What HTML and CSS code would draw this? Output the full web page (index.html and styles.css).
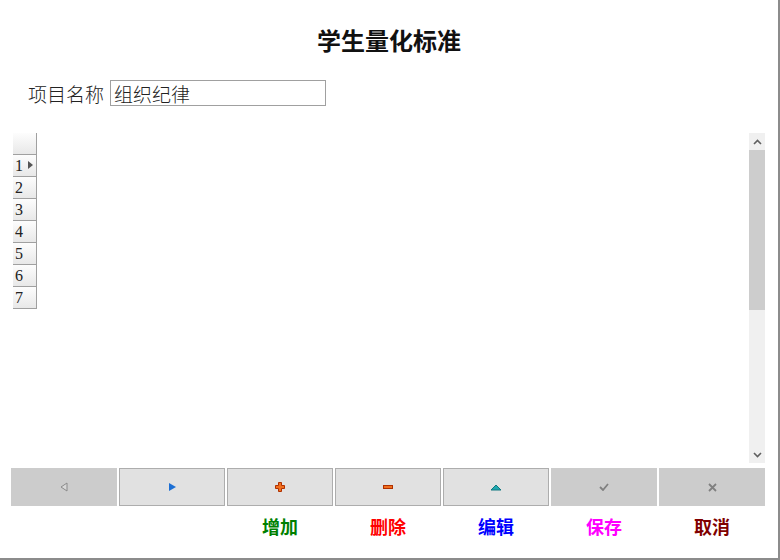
FILE: index.html
```html
<!DOCTYPE html>
<html lang="zh">
<head>
<meta charset="UTF-8">
<title>学生量化标准</title>
<link rel="stylesheet" href="styles.css">
</head>
<body>
<div class="frame">
    <h2 class="title">学生量化标准</h2>

    <div class="field">
        <label for="itemName">项目名称</label>
        <input type="text" id="itemName" value="组织纪律">
    </div>

    <div class="grid">
        <div class="rowheads">
            <div class="rh corner"></div>
            <div class="rh">1<span class="cur"></span></div>
            <div class="rh">2</div>
            <div class="rh">3</div>
            <div class="rh">4</div>
            <div class="rh">5</div>
            <div class="rh">6</div>
            <div class="rh">7</div>
        </div>
        <div class="cells"></div>
        <div class="vscroll">
            <div class="arrow">
                <svg width="9" height="6" viewBox="0 0 9 6"><path d="M1 5 L4.5 1.5 L8 5" fill="none" stroke="#606060" stroke-width="1.6"/></svg>
            </div>
            <div class="thumb"></div>
            <div class="track"></div>
            <div class="arrow">
                <svg width="9" height="6" viewBox="0 0 9 6"><path d="M1 1 L4.5 4.5 L8 1" fill="none" stroke="#606060" stroke-width="1.6"/></svg>
            </div>
        </div>
    </div>

    <div class="navbar">
        <div class="nbtn off">
            <svg width="10" height="10" viewBox="0 0 10 10"><path d="M8 1 L8 9 L2 5 Z" fill="#d8d8d8" stroke="#8a8a8a" stroke-width="1"/></svg>
        </div>
        <div class="nbtn">
            <svg width="10" height="10" viewBox="0 0 10 10"><path d="M2 1 L9 5 L2 9 Z" fill="#1c6fd4"/></svg>
        </div>
        <div class="nbtn">
            <svg width="10" height="10" viewBox="0 0 10 10"><path d="M3.5 0.5 H6.5 V3.5 H9.5 V6.5 H6.5 V9.5 H3.5 V6.5 H0.5 V3.5 H3.5 Z" fill="#f07020" stroke="#b03000" stroke-width="1"/></svg>
        </div>
        <div class="nbtn">
            <svg width="10" height="6" viewBox="0 0 10 6"><rect x="0.5" y="1.5" width="9" height="3" fill="#f07020" stroke="#b03000" stroke-width="1"/></svg>
        </div>
        <div class="nbtn">
            <svg width="12" height="7" viewBox="0 0 12 7"><path d="M1 6 L6 1 L11 6 Z" fill="#20a8b0" stroke="#107880" stroke-width="1"/></svg>
        </div>
        <div class="nbtn off">
            <svg width="10" height="8" viewBox="0 0 10 8"><path d="M1 4 L4 7 L9 1" fill="none" stroke="#808080" stroke-width="1.8"/></svg>
        </div>
        <div class="nbtn off">
            <svg width="9" height="9" viewBox="0 0 9 9"><path d="M1 1 L8 8 M8 1 L1 8" fill="none" stroke="#808080" stroke-width="1.8"/></svg>
        </div>
    </div>

    <div class="captions">
        <span></span>
        <span></span>
        <span class="add">增加</span>
        <span class="del">删除</span>
        <span class="edit">编辑</span>
        <span class="save">保存</span>
        <span class="cancel">取消</span>
    </div>
</div>
</body>
</html>
```

FILE: styles.css
```css
body {
    margin: 0;
    padding: 0;
    background-color: #fff;
    font-family: "Liberation Serif", "Noto Sans CJK SC", serif;
}
.frame {
    width: 778px;
    height: 558px;
    border-right: 2px solid #8c8c8c;
    border-bottom: 2px solid #8c8c8c;
    box-sizing: content-box;
    overflow: hidden;
}
.title {
    margin: 0;
    padding-top: 26px;
    height: 28px;
    text-align: center;
    font-size: 24px;
    line-height: 28px;
    font-weight: bold;
    color: #111;
    font-family: "Noto Sans CJK SC", serif;
}
.field {
    display: flex;
    align-items: center;
    gap: 6px;
    margin-top: 26px;
    padding-left: 28px;
    height: 26px;
}
.field label {
    font-size: 19px;
    color: #222;
    font-family: "Noto Sans CJK SC", serif;
    font-weight: 300;
}
.field input {
    width: 216px;
    height: 26px;
    box-sizing: border-box;
    border: 1px solid #a0a0a0;
    padding: 0 3px;
    font-size: 19px;
    font-family: "Noto Sans CJK SC", serif;
    font-weight: 300;
    color: #222;
    outline: none;
}
.grid {
    display: flex;
    margin: 27px 0 0 13px;
    width: 752px;
    height: 330px;
}
.rowheads {
    width: 24px;
    display: flex;
    flex-direction: column;
}
.rh {
    height: 21px;
    border-right: 1px solid #a0a0a0;
    border-bottom: 1px solid #a0a0a0;
    background: linear-gradient(#fdfdfd, #e8e8e8);
    font-size: 16px;
    line-height: 21px;
    padding-left: 2px;
    color: #222;
    font-family: "Liberation Serif", serif;
    position: relative;
}
.corner {
    border-bottom: 1px solid #a0a0a0;
}
.cur {
    position: absolute;
    right: 3px;
    top: 6px;
    border-left: 5px solid #555;
    border-top: 4px solid transparent;
    border-bottom: 4px solid transparent;
}
.cells {
    flex: 1;
}
.vscroll {
    width: 16px;
    display: flex;
    flex-direction: column;
    background-color: #f0f0f0;
}
.arrow {
    height: 17px;
    display: flex;
    align-items: center;
    justify-content: center;
}
.thumb {
    height: 160px;
    background-color: #cdcdcd;
}
.track {
    flex: 1;
}
.navbar {
    display: flex;
    gap: 2px;
    margin: 5px 0 0 11px;
    width: 754px;
}
.nbtn {
    width: 106px;
    height: 38px;
    box-sizing: border-box;
    border: 1px solid #adadad;
    background-color: #e1e1e1;
    display: flex;
    align-items: center;
    justify-content: center;
}
.nbtn.off {
    background-color: #cccccc;
    border-color: #cccccc;
}
.captions {
    display: flex;
    gap: 2px;
    margin: 8px 0 0 11px;
    width: 754px;
}
.captions span {
    width: 106px;
    text-align: center;
    font-size: 18px;
    line-height: 24px;
    font-weight: bold;
    font-family: "Noto Sans CJK SC", serif;
}
.add { color: #008000; }
.del { color: #ff0000; }
.edit { color: #0000ff; }
.save { color: #ff00ff; }
.cancel { color: #800000; }
```
